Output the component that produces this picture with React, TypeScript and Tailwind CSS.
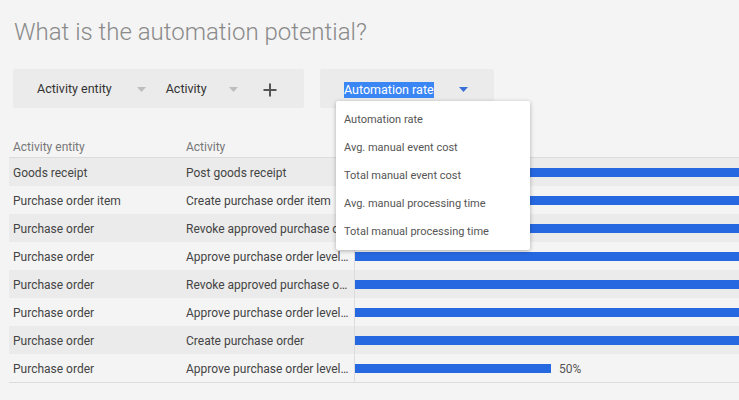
import React from "react"

const rows = [
  { entity: "Goods receipt", activity: "Post goods receipt", rate: 100 },
  { entity: "Purchase order item", activity: "Create purchase order item", rate: 100 },
  { entity: "Purchase order", activity: "Revoke approved purchase order", rate: 100 },
  { entity: "Purchase order", activity: "Approve purchase order level 1", rate: 100 },
  { entity: "Purchase order", activity: "Revoke approved purchase order level 2", rate: 100 },
  { entity: "Purchase order", activity: "Approve purchase order level 2", rate: 100 },
  { entity: "Purchase order", activity: "Create purchase order", rate: 100 },
  { entity: "Purchase order", activity: "Approve purchase order level 3", rate: 50 },
]

const options = [
  "Automation rate",
  "Avg. manual event cost",
  "Total manual event cost",
  "Avg. manual processing time",
  "Total manual processing time",
]

function Caret({ color }: { color: string }) {
  return (
    <svg width="9" height="5" viewBox="0 0 9 5" className="shrink-0">
      <path d="M0 0 L9 0 L4.5 5 Z" fill={color} />
    </svg>
  )
}

export default function App() {
  return (
    <div
      className="relative w-[739px] h-[400px] overflow-hidden bg-[#f4f4f4]"
      style={{ fontFamily: "Roboto, 'Noto Sans', sans-serif" }}
    >
      <h1 className="pt-[18px] pl-[14px] text-[24px] leading-[28px] font-light text-[#8a8a8a] whitespace-nowrap">
        What is the automation potential?
      </h1>

      {/* filters */}
      <div className="flex gap-4 pl-[13px] mt-[23px]">
        <div className="flex items-center w-[291px] h-[39px] bg-[#ebebeb] rounded-[2px] pl-6 pt-[2px] text-[12.5px] text-[#333]">
          <span>Activity entity</span>
          <span className="ml-[25px]">
            <Caret color="#bdbdbd" />
          </span>
          <span className="ml-[20px]">Activity</span>
          <span className="ml-[22px]">
            <Caret color="#bdbdbd" />
          </span>
          <svg width="14" height="14" viewBox="0 0 14 14" className="ml-[25px]">
            <path d="M7 0.5 V13.5 M0.5 7 H13.5" stroke="#555" strokeWidth="2" />
          </svg>
        </div>
        <div className="flex items-center w-[174px] h-[39px] bg-[#ebebeb] rounded-[2px] pl-6 pt-[2px] text-[12.5px]">
          <span className="bg-[#3a86f5] text-white leading-[16px]">Automation rate</span>
          <span className="ml-[25px]">
            <Caret color="#3b6fd8" />
          </span>
        </div>
      </div>

      {/* table */}
      <div className="mt-[29px] ml-[9px]">
        <div className="flex h-[21px] items-center border-b border-[#dcdcdc] text-[12px] text-[#777]">
          <div className="w-[173px] shrink-0 pl-1">Activity entity</div>
          <div className="w-[172px] shrink-0 pl-1">Activity</div>
        </div>
        {rows.map((r, i) => (
          <div
            key={i}
            className={`flex items-center text-[12px] text-[#444] ${
              i % 2 === 0 ? "bg-[#ebebeb]" : "bg-[#f4f4f4]"
            } ${i === rows.length - 1 ? "border-b border-[#dcdcdc] h-[29px]" : "h-[28px]"}`}
          >
            <div className="w-[173px] shrink-0 pl-1 pt-[2px] truncate">{r.entity}</div>
            <div className="w-[172px] shrink-0 pl-1 pr-1 pt-[2px] truncate">{r.activity}</div>
            <div className="flex items-center h-full shrink-0 border-l border-[#dcdcdc]">
              <div className="h-[9px] shrink-0 bg-[#2668e0]" style={{ width: `${(r.rate / 100) * 392}px` }} />
              {r.rate < 100 && <span className="ml-2 pt-[2px] text-[#555]">{r.rate}%</span>}
            </div>
          </div>
        ))}
      </div>

      {/* dropdown menu */}
      <div className="absolute left-[336px] top-[101px] w-[194px] bg-white rounded-[2px] shadow-[0_1px_4px_rgba(0,0,0,0.3)] pt-[5px] pb-[4px]">
        {options.map((o) => (
          <div key={o} className="h-[28px] flex items-center pl-2 text-[11px] text-[#555]">
            {o}
          </div>
        ))}
      </div>
    </div>
  )
}
